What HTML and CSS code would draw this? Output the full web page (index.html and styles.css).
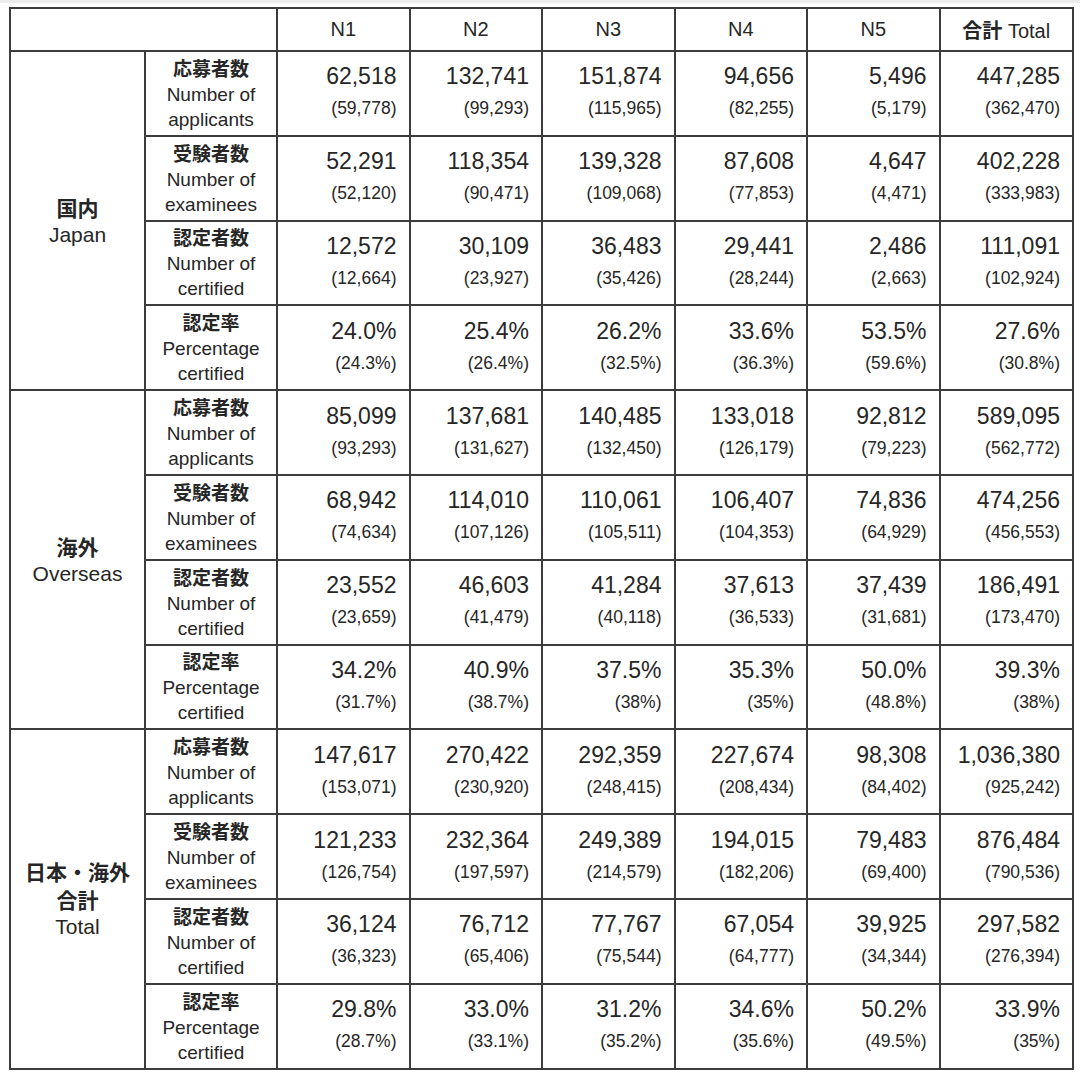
FILE: index.html
```html
<!DOCTYPE html>
<html lang="ja">
<head>
<meta charset="utf-8">
<title>JLPT results</title>
<link rel="stylesheet" href="styles.css">
</head>
<body>
<div class="topstrip"></div>
<div class="page">
<table class="stats">
<colgroup>
<col class="c-group"><col class="c-label">
<col class="c-num"><col class="c-num"><col class="c-num"><col class="c-num"><col class="c-num">
<col class="c-total">
</colgroup>
<thead>
<tr class="head">
<th colspan="2"></th><th>N1</th><th>N2</th><th>N3</th><th>N4</th><th>N5</th><th><span class="jp">合計</span> Total</th>
</tr>
</thead>
<tbody>
<tr>
<th class="group" rowspan="4"><span class="jp">国内</span><br>Japan</th>
<th class="label"><span class="jp">応募者数</span><br>Number of<br>applicants</th>
<td><div class="m">62,518</div><div class="s">(59,778)</div></td>
<td><div class="m">132,741</div><div class="s">(99,293)</div></td>
<td><div class="m">151,874</div><div class="s">(115,965)</div></td>
<td><div class="m">94,656</div><div class="s">(82,255)</div></td>
<td><div class="m">5,496</div><div class="s">(5,179)</div></td>
<td><div class="m">447,285</div><div class="s">(362,470)</div></td>
</tr>
<tr>
<th class="label"><span class="jp">受験者数</span><br>Number of<br>examinees</th>
<td><div class="m">52,291</div><div class="s">(52,120)</div></td>
<td><div class="m">118,354</div><div class="s">(90,471)</div></td>
<td><div class="m">139,328</div><div class="s">(109,068)</div></td>
<td><div class="m">87,608</div><div class="s">(77,853)</div></td>
<td><div class="m">4,647</div><div class="s">(4,471)</div></td>
<td><div class="m">402,228</div><div class="s">(333,983)</div></td>
</tr>
<tr>
<th class="label"><span class="jp">認定者数</span><br>Number of<br>certified</th>
<td><div class="m">12,572</div><div class="s">(12,664)</div></td>
<td><div class="m">30,109</div><div class="s">(23,927)</div></td>
<td><div class="m">36,483</div><div class="s">(35,426)</div></td>
<td><div class="m">29,441</div><div class="s">(28,244)</div></td>
<td><div class="m">2,486</div><div class="s">(2,663)</div></td>
<td><div class="m">111,091</div><div class="s">(102,924)</div></td>
</tr>
<tr>
<th class="label"><span class="jp">認定率</span><br>Percentage<br>certified</th>
<td><div class="m">24.0%</div><div class="s">(24.3%)</div></td>
<td><div class="m">25.4%</div><div class="s">(26.4%)</div></td>
<td><div class="m">26.2%</div><div class="s">(32.5%)</div></td>
<td><div class="m">33.6%</div><div class="s">(36.3%)</div></td>
<td><div class="m">53.5%</div><div class="s">(59.6%)</div></td>
<td><div class="m">27.6%</div><div class="s">(30.8%)</div></td>
</tr>

<tr>
<th class="group" rowspan="4"><span class="jp">海外</span><br>Overseas</th>
<th class="label"><span class="jp">応募者数</span><br>Number of<br>applicants</th>
<td><div class="m">85,099</div><div class="s">(93,293)</div></td>
<td><div class="m">137,681</div><div class="s">(131,627)</div></td>
<td><div class="m">140,485</div><div class="s">(132,450)</div></td>
<td><div class="m">133,018</div><div class="s">(126,179)</div></td>
<td><div class="m">92,812</div><div class="s">(79,223)</div></td>
<td><div class="m">589,095</div><div class="s">(562,772)</div></td>
</tr>
<tr>
<th class="label"><span class="jp">受験者数</span><br>Number of<br>examinees</th>
<td><div class="m">68,942</div><div class="s">(74,634)</div></td>
<td><div class="m">114,010</div><div class="s">(107,126)</div></td>
<td><div class="m">110,061</div><div class="s">(105,511)</div></td>
<td><div class="m">106,407</div><div class="s">(104,353)</div></td>
<td><div class="m">74,836</div><div class="s">(64,929)</div></td>
<td><div class="m">474,256</div><div class="s">(456,553)</div></td>
</tr>
<tr>
<th class="label"><span class="jp">認定者数</span><br>Number of<br>certified</th>
<td><div class="m">23,552</div><div class="s">(23,659)</div></td>
<td><div class="m">46,603</div><div class="s">(41,479)</div></td>
<td><div class="m">41,284</div><div class="s">(40,118)</div></td>
<td><div class="m">37,613</div><div class="s">(36,533)</div></td>
<td><div class="m">37,439</div><div class="s">(31,681)</div></td>
<td><div class="m">186,491</div><div class="s">(173,470)</div></td>
</tr>
<tr>
<th class="label"><span class="jp">認定率</span><br>Percentage<br>certified</th>
<td><div class="m">34.2%</div><div class="s">(31.7%)</div></td>
<td><div class="m">40.9%</div><div class="s">(38.7%)</div></td>
<td><div class="m">37.5%</div><div class="s">(38%)</div></td>
<td><div class="m">35.3%</div><div class="s">(35%)</div></td>
<td><div class="m">50.0%</div><div class="s">(48.8%)</div></td>
<td><div class="m">39.3%</div><div class="s">(38%)</div></td>
</tr>

<tr>
<th class="group" rowspan="4"><span class="jp">日本・海外</span><br><span class="jp">合計</span><br>Total</th>
<th class="label"><span class="jp">応募者数</span><br>Number of<br>applicants</th>
<td><div class="m">147,617</div><div class="s">(153,071)</div></td>
<td><div class="m">270,422</div><div class="s">(230,920)</div></td>
<td><div class="m">292,359</div><div class="s">(248,415)</div></td>
<td><div class="m">227,674</div><div class="s">(208,434)</div></td>
<td><div class="m">98,308</div><div class="s">(84,402)</div></td>
<td><div class="m">1,036,380</div><div class="s">(925,242)</div></td>
</tr>
<tr>
<th class="label"><span class="jp">受験者数</span><br>Number of<br>examinees</th>
<td><div class="m">121,233</div><div class="s">(126,754)</div></td>
<td><div class="m">232,364</div><div class="s">(197,597)</div></td>
<td><div class="m">249,389</div><div class="s">(214,579)</div></td>
<td><div class="m">194,015</div><div class="s">(182,206)</div></td>
<td><div class="m">79,483</div><div class="s">(69,400)</div></td>
<td><div class="m">876,484</div><div class="s">(790,536)</div></td>
</tr>
<tr>
<th class="label"><span class="jp">認定者数</span><br>Number of<br>certified</th>
<td><div class="m">36,124</div><div class="s">(36,323)</div></td>
<td><div class="m">76,712</div><div class="s">(65,406)</div></td>
<td><div class="m">77,767</div><div class="s">(75,544)</div></td>
<td><div class="m">67,054</div><div class="s">(64,777)</div></td>
<td><div class="m">39,925</div><div class="s">(34,344)</div></td>
<td><div class="m">297,582</div><div class="s">(276,394)</div></td>
</tr>
<tr>
<th class="label"><span class="jp">認定率</span><br>Percentage<br>certified</th>
<td><div class="m">29.8%</div><div class="s">(28.7%)</div></td>
<td><div class="m">33.0%</div><div class="s">(33.1%)</div></td>
<td><div class="m">31.2%</div><div class="s">(35.2%)</div></td>
<td><div class="m">34.6%</div><div class="s">(35.6%)</div></td>
<td><div class="m">50.2%</div><div class="s">(49.5%)</div></td>
<td><div class="m">33.9%</div><div class="s">(35%)</div></td>
</tr>
</tbody>
</table>
</div>
</body>
</html>
```

FILE: styles.css
```css
html, body {
  margin: 0;
  padding: 0;
  background: #ffffff;
}

body {
  font-family: "Liberation Sans", Arial, "Noto Sans CJK JP", sans-serif;
  color: #262626;
}

.topstrip {
  height: 3px;
  background: #ececec;
}

.page {
  padding: 4px 0 0 9px;
}

.stats {
  border-collapse: collapse;
  table-layout: fixed;
  width: 1063px;
}

.c-group { width: 135px; }
.c-label { width: 132px; }
.c-num { width: 132.5px; }
.c-total { width: 133.5px; }

.stats th,
.stats td {
  border: 2px solid #3c3c3c;
  padding: 0;
  font-weight: normal;
}

.jp {
  font-family: "Noto Sans CJK JP", sans-serif;
  font-weight: 700;
}

.head th {
  height: 41px;
  font-size: 20px;
  text-align: center;
  vertical-align: middle;
}

.stats tbody tr {
  height: 84.8px;
}

.group {
  font-size: 21px;
  line-height: 26px;
  text-align: center;
  vertical-align: middle;
}

.label {
  font-size: 19px;
  line-height: 25px;
  text-align: center;
  vertical-align: middle;
}

.stats td {
  text-align: right;
  vertical-align: middle;
  padding: 0 12px 2px 0;
}

.m {
  font-size: 23px;
  line-height: 32px;
}

.s {
  font-size: 17.5px;
  line-height: 32px;
}
```
